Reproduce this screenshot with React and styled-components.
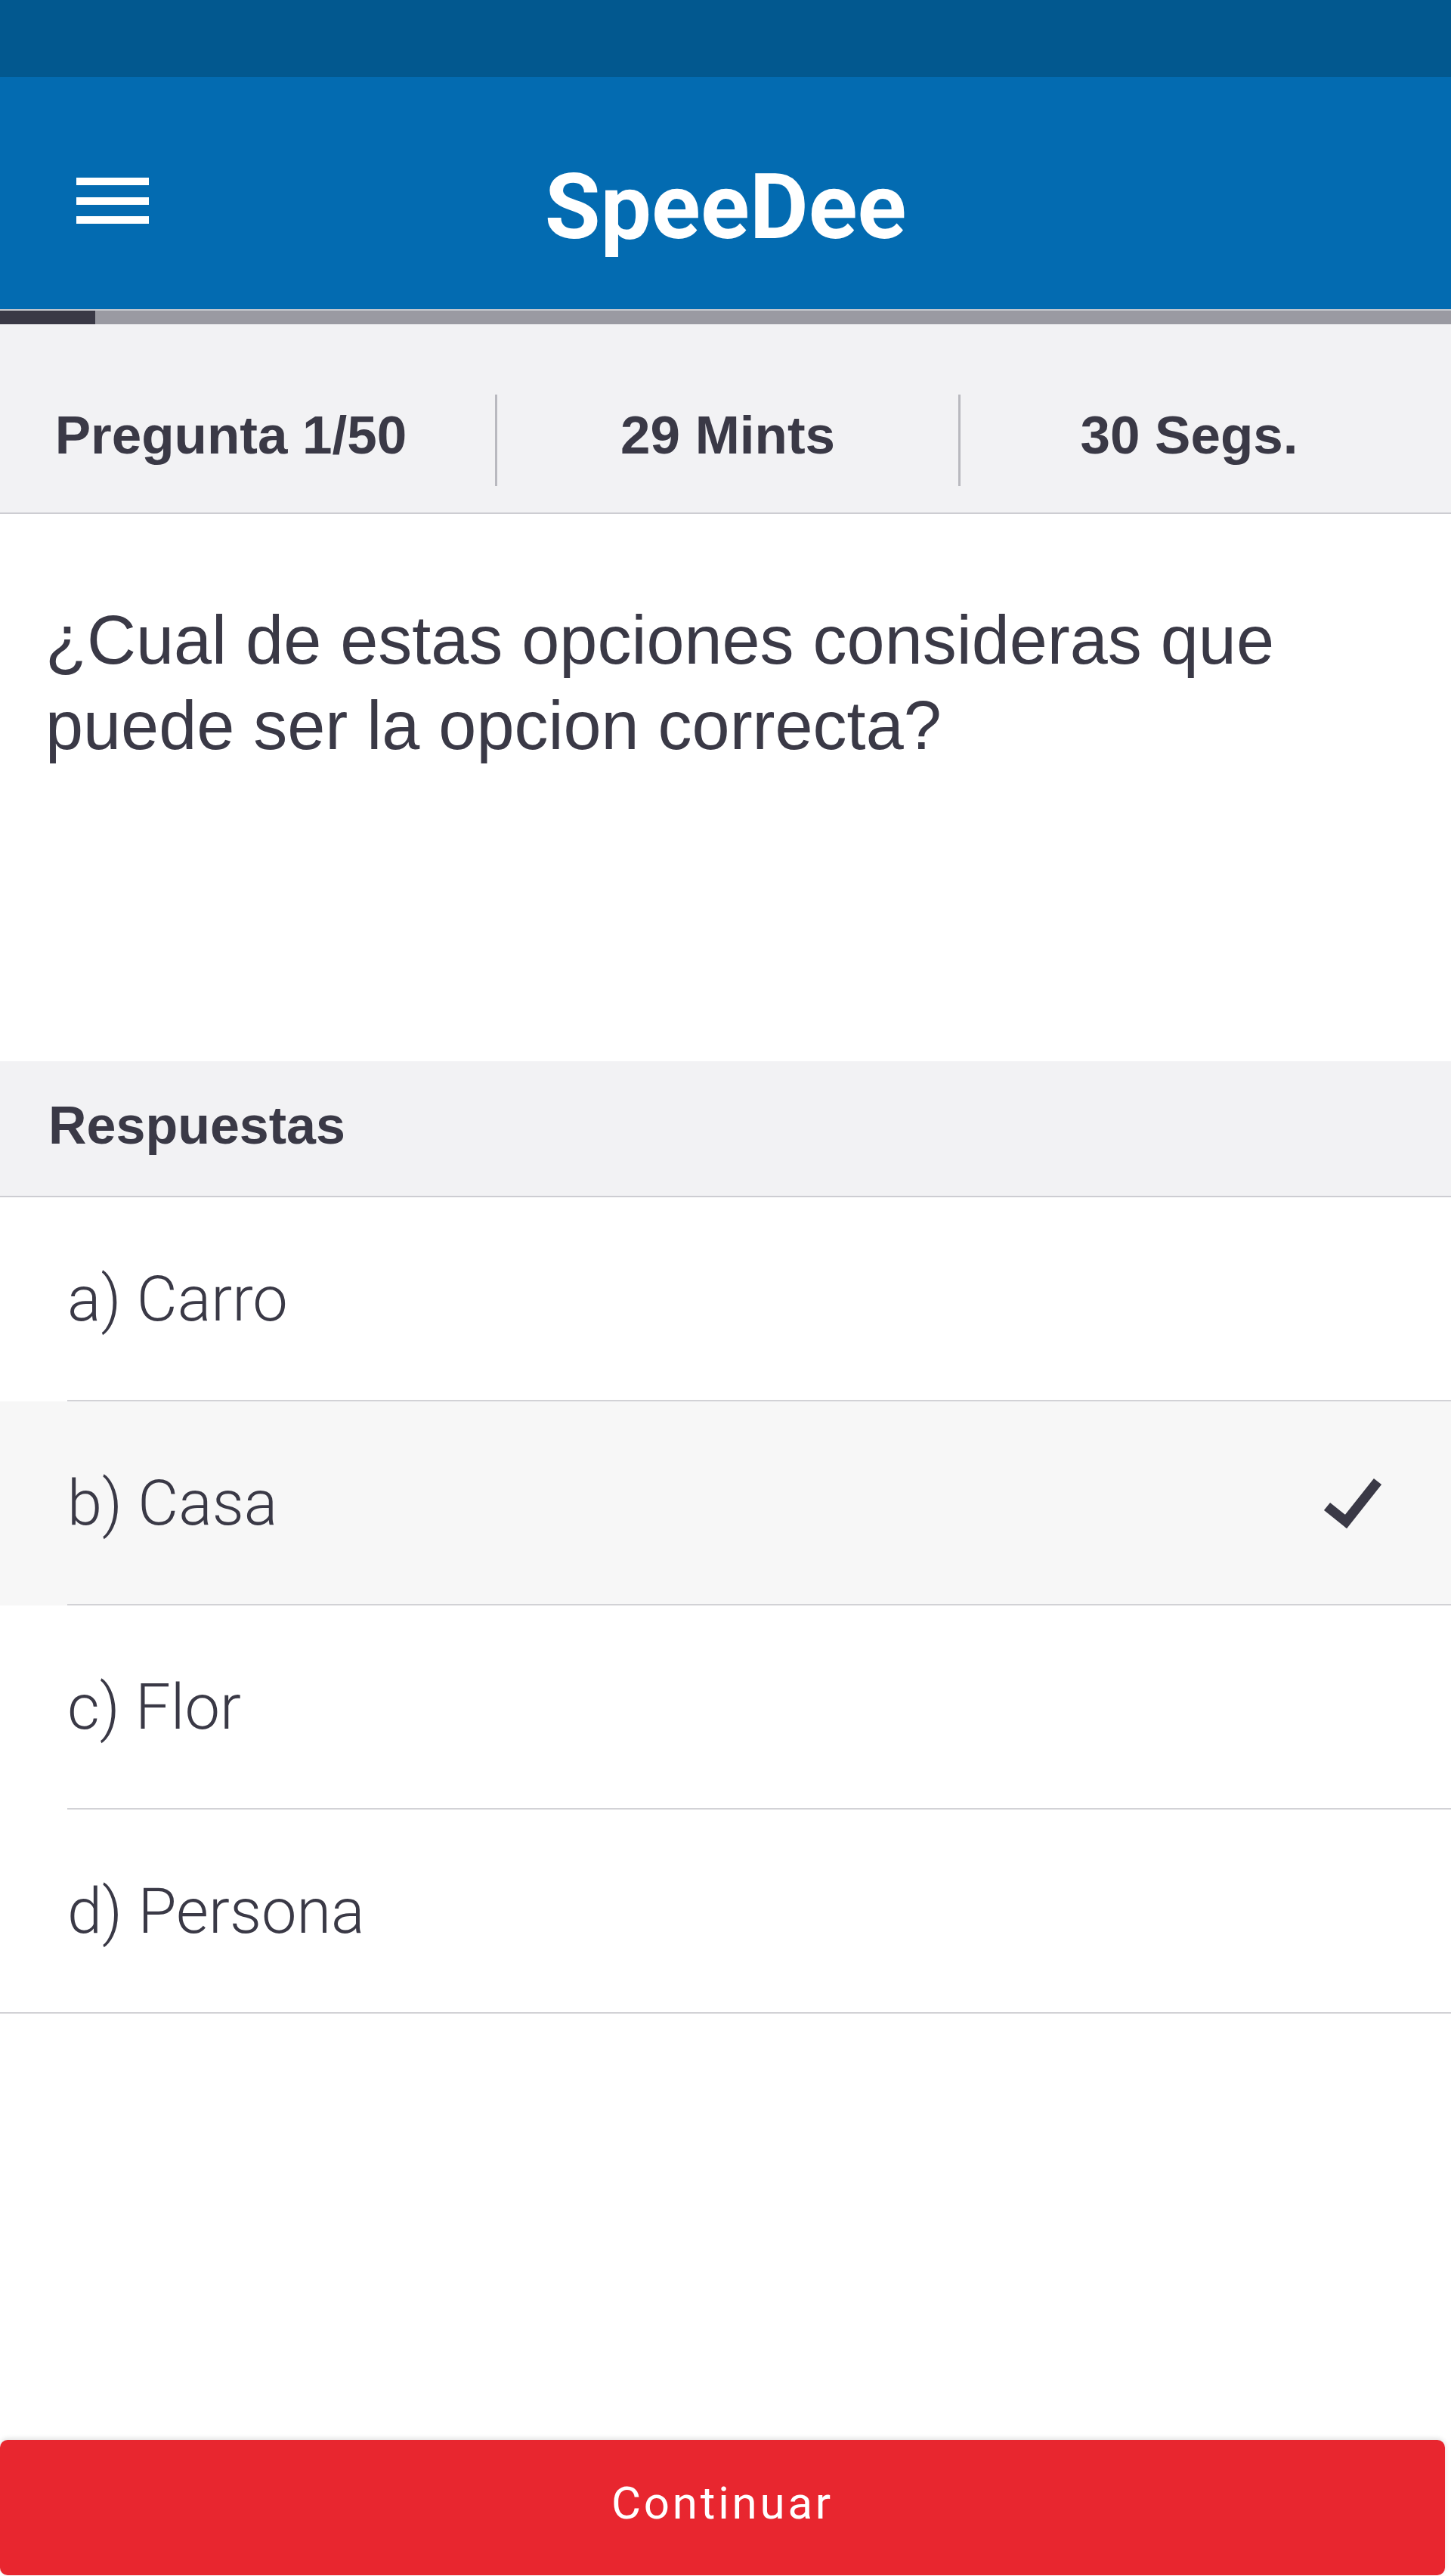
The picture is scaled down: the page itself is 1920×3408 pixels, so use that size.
import styled, { createGlobalStyle } from "styled-components";

const GlobalStyle = createGlobalStyle`
  html, body {
    margin: 0;
    padding: 0;
    background: #ffffff;
  }
  * {
    box-sizing: border-box;
  }
`;

const answers = [
  { id: "a", label: "a) Carro" },
  { id: "b", label: "b) Casa", selected: true },
  { id: "c", label: "c) Flor" },
  { id: "d", label: "d) Persona" },
];

const Page = styled.div`
  width: 1920px;
  min-height: 3408px;
  display: flex;
  flex-direction: column;
  background: #ffffff;
  color: #3a3946;
  font-family: "Liberation Sans", Arial, sans-serif;
`;

const StatusBar = styled.div`
  height: 102px;
  background: #02588f;
`;

const NavBar = styled.header`
  height: 309px;
  background: #036bb1;
  display: grid;
  grid-template-columns: 1fr auto 1fr;
  align-items: start;
  border-bottom: 2px solid #c6c8ce;
`;

const MenuButton = styled.button`
  margin: 133px 0 0 101px;
  padding: 0;
  width: 96px;
  border: none;
  background: transparent;
  display: flex;
  flex-direction: column;
  gap: 15.5px;
  cursor: pointer;
`;

const MenuBar = styled.span`
  display: block;
  height: 10px;
  background: #ffffff;
`;

const Title = styled.h1`
  margin: 112px 0 0;
  font-family: Roboto, "Liberation Sans", sans-serif;
  font-weight: 700;
  font-size: 120px;
  line-height: 120px;
  color: #ffffff;
`;

const Progress = styled.div`
  height: 18px;
  background: #9a9aa2;
`;

const ProgressFill = styled.div`
  height: 100%;
  background: #3a3946;
`;

const StatsRow = styled.div`
  display: grid;
  grid-template-columns: 655px 613px 1fr;
  padding: 93px 0 35px;
  background: #f2f2f4;
  border-bottom: 2px solid #cdcdd2;
`;

const Stat = styled.div`
  height: 121px;
  padding: 14px ${(p) => p.$pr || 0}px 0 0;
  text-align: center;
  font-size: 71px;
  font-weight: 700;
  line-height: 80px;
  color: #3a3946;
  border-left: ${(p) => (p.$divider ? "3px solid #b9b9bf" : "none")};
`;

const Question = styled.div`
  height: 724px;
  padding: 111px 80px 0 60px;
  font-size: 90px;
  line-height: 113px;
  color: #3a3946;
`;

const SectionHeader = styled.div`
  height: 180px;
  padding: 45px 0 0 64px;
  background: #f2f2f4;
  border-bottom: 2px solid #cdcdd2;
  font-size: 70px;
  font-weight: 700;
  color: #3a3946;
`;

const AnswerRow = styled.div`
  background: ${(p) => (p.$selected ? "#f7f7f7" : "#ffffff")};
`;

const AnswerInner = styled.div`
  height: 270px;
  margin-left: ${(p) => (p.$last ? 0 : 89)}px;
  padding: 0 85px 0 ${(p) => (p.$last ? 89 : 0)}px;
  display: flex;
  align-items: center;
  justify-content: space-between;
  border-bottom: 2px solid #d2d2d6;
`;

const AnswerText = styled.span`
  font-family: Roboto, "Liberation Sans", sans-serif;
  font-weight: 300;
  font-size: 83px;
  color: #3a3946;
`;

const Spacer = styled.div`
  flex: 1;
`;

const ContinueButton = styled.button`
  width: 1912px;
  height: 179px;
  margin-bottom: 1px;
  padding: 0 0 12px;
  border: none;
  border-radius: 10px;
  background: #e8262f;
  box-shadow: 0 -2px 6px rgba(0, 0, 0, 0.12);
  color: #ffffff;
  font-family: Roboto, "Liberation Sans", sans-serif;
  font-size: 60px;
  font-weight: 400;
  letter-spacing: 3.8px;
  cursor: pointer;
`;

const Check = () => (
  <svg width="90" height="75" viewBox="0 0 90 75" aria-hidden="true">
    <polyline
      points="11,42 36,62 78,9"
      fill="none"
      stroke="#3a3946"
      strokeWidth="13"
      strokeLinecap="butt"
      strokeLinejoin="miter"
    />
  </svg>
);

const App = () => {
  return (
    <Page>
      <GlobalStyle />
      <StatusBar />
      <NavBar>
        <div>
          <MenuButton aria-label="Menu">
            <MenuBar />
            <MenuBar />
            <MenuBar />
          </MenuButton>
        </div>
        <Title>SpeeDee</Title>
        <div />
      </NavBar>
      <Progress>
        <ProgressFill style={{ width: `${(126 / 1920) * 100}%` }} />
      </Progress>
      <StatsRow>
        <Stat $pr={44}>Pregunta 1/50</Stat>
        <Stat $divider>29 Mints</Stat>
        <Stat $divider $pr={44}>30 Segs.</Stat>
      </StatsRow>
      <Question>¿Cual de estas opciones consideras que puede ser la opcion correcta?</Question>
      <SectionHeader>Respuestas</SectionHeader>
      {answers.map((a, i) => (
        <AnswerRow key={a.id} $selected={a.selected}>
          <AnswerInner $last={i === answers.length - 1}>
            <AnswerText>{a.label}</AnswerText>
            {a.selected && <Check />}
          </AnswerInner>
        </AnswerRow>
      ))}
      <Spacer />
      <ContinueButton>Continuar</ContinueButton>
    </Page>
  );
};

export default App;
